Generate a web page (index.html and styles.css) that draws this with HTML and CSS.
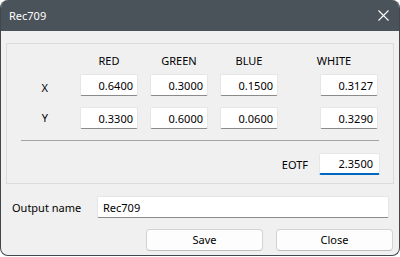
FILE: index.html
```html
<!DOCTYPE html>
<html>
<head>
<meta charset="utf-8">
<link rel="stylesheet" href="styles.css">
</head>
<body>
<div class="window">
  <div class="titlebar">
    <span class="title">Rec709</span>
    <svg class="close-x" width="11" height="11" viewBox="0 0 11 11"><path d="M0.5 0.5 L10.5 10.5 M10.5 0.5 L0.5 10.5" stroke="#ffffff" stroke-width="1.1" fill="none"/></svg>
  </div>
  <div class="body">
    <div class="group">
      <div class="grid">
        <div></div>
        <div class="head">RED</div>
        <div class="head">GREEN</div>
        <div class="head">BLUE</div>
        <div class="head">WHITE</div>

        <div class="rowlabel rowlabel-x">X</div>
        <div class="field">0.6400</div>
        <div class="field">0.3000</div>
        <div class="field">0.1500</div>
        <div class="field field-end">0.3127</div>

        <div class="rowlabel">Y</div>
        <div class="field">0.3300</div>
        <div class="field">0.6000</div>
        <div class="field">0.0600</div>
        <div class="field field-end">0.3290</div>
      </div>
      <div class="divider"></div>
      <div class="eotf-row">
        <span class="label">EOTF</span>
        <div class="field field-focus">2.3500</div>
      </div>
    </div>
    <div class="output-row">
      <span class="label">Output name</span>
      <div class="field field-text">Rec709</div>
    </div>
    <div class="button-row">
      <div class="button">Save</div>
      <div class="button">Close</div>
    </div>
  </div>
</div>
</body>
</html>
```

FILE: styles.css
```css
html, body {
  margin: 0;
  padding: 0;
  background: #ffffff;
}
body {
  font-family: "Noto Sans", "Open Sans", sans-serif;
  font-size: 11px;
  color: #000000;
}
.window {
  width: 400px;
  height: 256px;
  box-sizing: border-box;
  border: 1px solid #40474d;
  border-top: none;
  border-radius: 8px;
  overflow: hidden;
  display: flex;
  flex-direction: column;
  background: #f0f0f0;
}
.titlebar {
  height: 31px;
  flex: none;
  background: #4b535a;
  display: flex;
  align-items: center;
  padding: 0 10px 0 8px;
  color: #ffffff;
}
.title {
  font-size: 11px;
}
.close-x {
  margin-left: auto;
  display: block;
}
.body {
  flex: 1;
  padding: 12px 5px 0 5px;
  display: flex;
  flex-direction: column;
}
.group {
  height: 141px;
  box-sizing: border-box;
  border: 1px solid #dcdcdc;
  padding: 6px 0 8px 0;
}
.grid {
  display: grid;
  grid-template-columns: 61px 58px 58px 58px 88px;
  grid-template-rows: 24px 33px 22px;
  column-gap: 12px;
  align-items: start;
}
.head {
  height: 22px;
  line-height: 22px;
  text-align: center;
}
.rowlabel {
  height: 22px;
  line-height: 22px;
  text-align: right;
  padding-right: 20px;
}
.rowlabel-x {
  padding-top: 3px;
}
.field {
  height: 22px;
  line-height: 21px;
  box-sizing: border-box;
  background: #ffffff;
  border: 1px solid #e6e6e6;
  border-bottom-color: #8a8a8a;
  border-radius: 2px;
  text-align: right;
  padding-right: 4px;
  width: 58px;
}
.field-end {
  justify-self: end;
}
.divider {
  height: 1px;
  background: #a3a3a3;
  margin: 11px 14px 0 14px;
}
.eotf-row {
  margin-top: 12px;
  display: flex;
  justify-content: flex-end;
  align-items: center;
  gap: 11px;
  padding-right: 13px;
}
.field-focus {
  width: 61px;
  border-bottom: 2px solid #0067c0;
  line-height: 20px;
  padding-right: 6px;
}
.output-row {
  margin-top: 12px;
  display: flex;
  align-items: center;
  padding-left: 6px;
  padding-right: 5px;
}
.output-row .label {
  width: 85px;
}
.field-text {
  flex: 1;
  width: auto;
  text-align: left;
  padding-left: 5px;
}
.button-row {
  margin-top: 11px;
  display: flex;
  justify-content: flex-end;
  gap: 13px;
  padding-right: 1px;
}
.button {
  width: 117px;
  height: 22px;
  box-sizing: border-box;
  line-height: 20px;
  text-align: center;
  background: #fdfdfd;
  border: 1px solid #d3d3d3;
  border-bottom-color: #bdbdbd;
  border-radius: 4px;
}
```
